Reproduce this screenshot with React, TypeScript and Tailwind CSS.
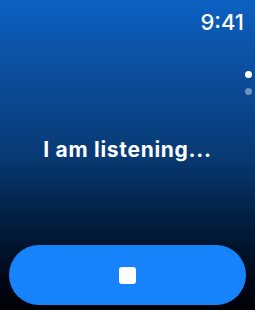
export default function App() {
  return (
    <div
      className="relative flex h-[310px] w-[255px] flex-col overflow-hidden bg-gradient-to-b from-[#0c60c2] via-[#083a74] via-50% to-[#000206] text-white"
      style={{ fontFamily: "Inter, 'Liberation Sans', sans-serif" }}
    >
      {/* status bar */}
      <div className="flex justify-end pr-[11px] pt-[10px]">
        <span className="text-[22px] leading-[24px] font-medium">9:41</span>
      </div>

      {/* page dots */}
      <div className="absolute right-[3px] top-[71px] flex flex-col gap-[10px]">
        <span className="block h-[7px] w-[7px] rounded-full bg-white" />
        <span className="block h-[7px] w-[7px] rounded-full bg-white/40" />
      </div>

      <div className="flex flex-1 items-center justify-center pt-[20px]">
        <p className="text-[21px] font-bold tracking-[0.7px]">I am listening...</p>
      </div>

      <div className="px-[9px] pb-[5px]">
        <button className="flex h-[60px] w-full items-center justify-center rounded-full bg-[#1783fb]">
          <span className="block h-[17px] w-[17px] rounded-[3px] bg-white" />
        </button>
      </div>
    </div>
  );
}
